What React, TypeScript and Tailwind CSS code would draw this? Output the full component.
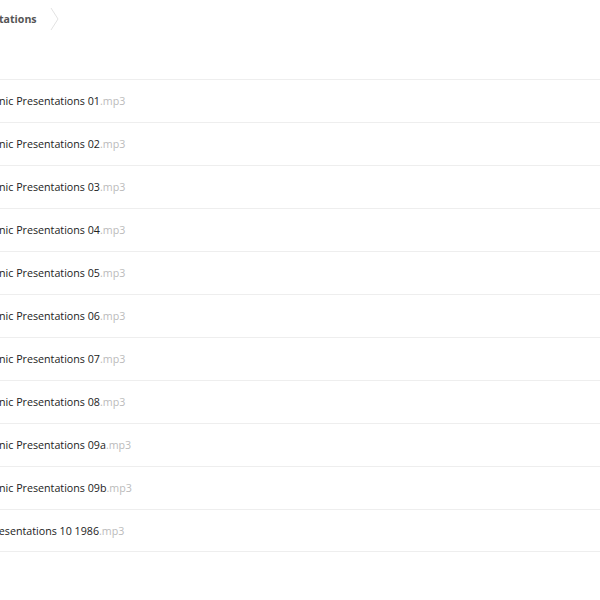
const files = [
  { name: "nic Presentations 01", off: "ml-[-1px]" },
  { name: "nic Presentations 02", off: "ml-[-1px]" },
  { name: "nic Presentations 03", off: "ml-[-1px]" },
  { name: "nic Presentations 04", off: "ml-[-1px]" },
  { name: "nic Presentations 05", off: "ml-[-1px]" },
  { name: "nic Presentations 06", off: "ml-[-1px]" },
  { name: "nic Presentations 07", off: "ml-[-1px]" },
  { name: "nic Presentations 08", off: "ml-[-1px]" },
  { name: "nic Presentations 09a", off: "ml-[-1px]" },
  { name: "nic Presentations 09b", off: "ml-[-1px]" },
  { name: "Presentations 10 1986", off: "ml-[-12px]" },
];

const App = () => {
  return (
    <div className="w-[600px] h-[600px] bg-white overflow-hidden font-['Open_Sans',sans-serif]">
      <div className="h-[37px] flex items-center">
        <span className="ml-[-1px] pt-[2px] text-[10.6px] font-bold text-[#555]">tations</span>
        <svg width="10" height="22" viewBox="0 0 10 22" className="ml-[13px]">
          <path d="M1 0 L8 11 L1 22" fill="none" stroke="#e2e2e2" strokeWidth="1" />
        </svg>
      </div>
      <div className="mt-[42px]">
        {files.map((f) => (
          <div
            key={f.name}
            className="h-[43px] border-t border-[#eeeeee] flex items-center pt-[1px] whitespace-nowrap text-[10.7px] last:border-b"
          >
            <span className={f.off + " text-[#222]"}>
              {f.name}
              <span className="text-[#bbbbbb]">.mp3</span>
            </span>
          </div>
        ))}
      </div>
    </div>
  );
};

export default App;
